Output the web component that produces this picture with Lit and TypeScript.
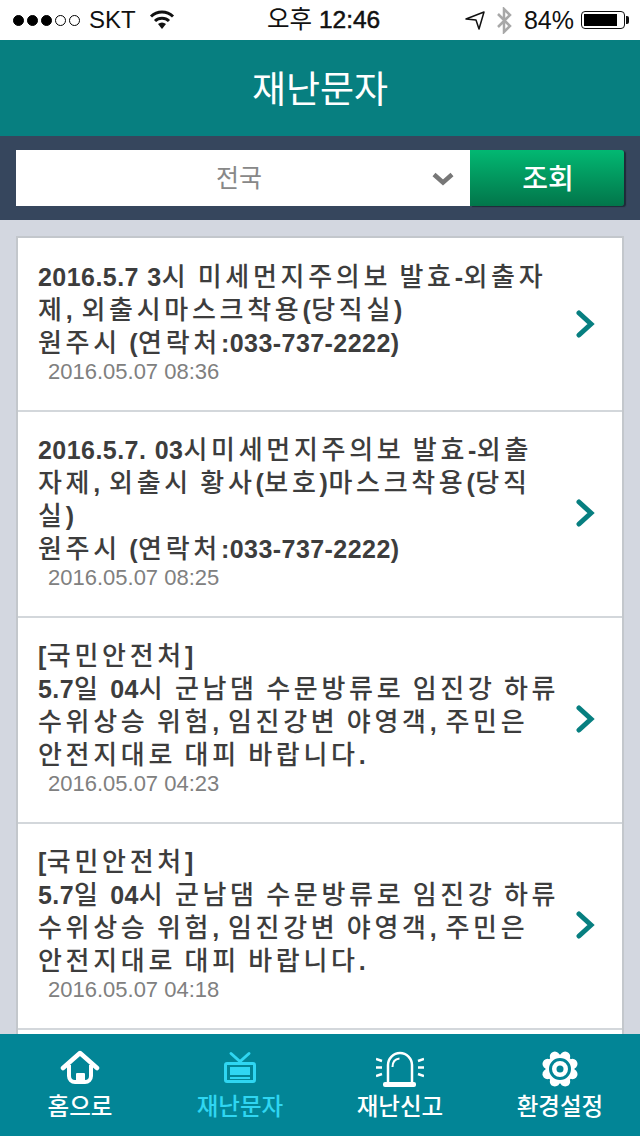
import { LitElement, html, css, svg } from 'lit';
import { customElement } from 'lit/decorators.js';

const alertLines = ['[국민안전처]', '5.7일 04시 군남댐 수문방류로 임진강 하류', '수위상승 위험, 임진강변 야영객, 주민은', '안전지대로 대피 바랍니다.'];

const messages = [
  { lines: ['2016.5.7 3시 미세먼지주의보 발효-외출자', '제, 외출시마스크착용(당직실)', '원주시 (연락처:033-737-2222)'], date: '2016.05.07 08:36' },
  { lines: ['2016.5.7. 03시미세먼지주의보 발효-외출', '자제, 외출시 황사(보호)마스크착용(당직', '실)', '원주시 (연락처:033-737-2222)'], date: '2016.05.07 08:25' },
  { lines: alertLines, date: '2016.05.07 04:23' },
  { lines: alertLines, date: '2016.05.07 04:18' },
];

const homeIcon = svg`<svg width="40" height="38" viewBox="0 0 40 38">
  <path d="M3 18 20 3l17 15" fill="none" stroke="currentColor" stroke-width="4.500" stroke-linecap="round" stroke-linejoin="round"/>
  <path d="M9 15v11a6 6 0 0 0 6 6h10a6 6 0 0 0 6-6V15" fill="none" stroke="currentColor" stroke-width="4"/>
  <path d="M16 33V24a1 1 0 0 1 1-1h7a1 1 0 0 1 1 1v9z" fill="currentColor"/>
</svg>`;

const tvIcon = svg`<svg width="32" height="38" viewBox="0 0 32 38">
  <path d="M7 3.500l9 8 9-8" fill="none" stroke="currentColor" stroke-width="3" stroke-linecap="round"/>
  <rect x="1.500" y="13.500" width="29" height="18" rx="1.500" fill="none" stroke="currentColor" stroke-width="3"/>
  <rect x="6" y="17" width="20" height="8" fill="currentColor"/>
  <rect x="6" y="27" width="20" height="2" fill="currentColor"/>
</svg>`;

const sirenIcon = svg`<svg width="48" height="38" viewBox="0 0 48 38">
  <path d="M12 32V15a12 12 0 0 1 24 0v17" fill="none" stroke="currentColor" stroke-width="2.500"/>
  <path d="M16.500 17c0-5 3-8 7-8.500" fill="none" stroke="currentColor" stroke-width="2"/>
  <rect x="7" y="32" width="33" height="5" rx="2" fill="currentColor"/>
  <path d="M0 9l6 2M0 17.500h6M0 26l6-2M48 9l-6 2M48 17.500h-6M48 26l-6-2" fill="none" stroke="currentColor" stroke-width="2.500"/>
</svg>`;

const lobes = [0, 45, 90, 135, 180, 225, 270, 315];
const gearIcon = svg`<svg width="38" height="38" viewBox="0 0 38 38">
  <circle cx="19" cy="19" r="14.500" fill="currentColor"/>
  ${lobes.map(a => svg`<circle cx="19" cy="5.500" r="5" fill="currentColor" transform="rotate(${a + 22.500} 19 19)"/>`)}
  <circle cx="19" cy="19" r="9.500" fill="none" stroke="#028596" stroke-width="3"/>
  <circle cx="19" cy="19" r="3.500" fill="#028596"/>
</svg>`;

// hangul runs get wider tracking and a lighter weight than the latin runs
const runs = (text: string) =>
  text.split(/([가-힣]+)/).map((part, i) => (i % 2 ? html`<span class="ko">${part}</span>` : part));

@customElement('app-root')
export class AppRoot extends LitElement {
  static styles = css`
    :host {
      display: flex;
      flex-direction: column;
      height: 1136px;
      overflow: hidden;
      background: #d3d7e0;
      font-family: 'Liberation Sans', 'Noto Sans CJK KR', sans-serif;
      position: relative;
    }
    .status {
      flex: none;
      height: 40px;
      background: #fff;
      display: flex;
      align-items: center;
      padding: 0 11px 0 13px;
      color: #111;
      font-size: 25px;
      position: relative;
    }
    .dots { display: flex; gap: 3px; margin-right: 9px; }
    .dot { width: 11px; height: 11px; border-radius: 50%; background: #000; border: 1px solid #000; box-sizing: border-box; }
    .dot.off { background: none; }
    .carrier { font-size: 24px; }
    .wifi { margin-left: 13px; }
    .left { display: flex; align-items: center; flex: 1; }
    .time { position: absolute; left: 267px; top: 2px; line-height: 36px; font-size: 24.500px; }
    .time b { font-weight: 400; -webkit-text-stroke: 0.5px #111; }
    .right { display: flex; align-items: center; }
    .bt { margin: 0 12px 0 11px; }
    .battery { width: 44px; height: 18px; border: 1px solid #111; border-radius: 4px; box-sizing: border-box; padding: 2px; margin-left: 7px; }
    .battery i { display: block; height: 100%; width: 86%; background: #000; }
    .nub { width: 3px; height: 8px; background: #111; border-radius: 0 2px 2px 0; margin-left: 1px; }
    .title {
      flex: none;
      height: 96px;
      box-sizing: border-box;
      padding-bottom: 2px;
      background: #077f80;
      color: #fff;
      font-size: 37px;
      display: flex;
      align-items: center;
      justify-content: center;
    }
    .search {
      flex: none;
      height: 84px;
      box-sizing: border-box;
      background: #36465d;
      padding: 14px 16px;
      display: flex;
    }
    .select {
      width: 454px;
      box-sizing: border-box;
      padding: 0 8px 5px 0;
      background: #fff;
      color: #888;
      font-size: 25px;
      display: flex;
      align-items: center;
      justify-content: center;
      position: relative;
    }
    .chev { position: absolute; left: 416px; top: 22px; }
    .btn {
      width: 154px;
      box-sizing: border-box;
      padding: 0 0 3px 2px;
      background: linear-gradient(#02b872, #02754a);
      color: #fff;
      font-size: 28px;
      font-weight: 500;
      display: flex;
      align-items: center;
      justify-content: center;
      border-radius: 0 3px 3px 0;
      box-shadow: 2px 1px 1px #1e2a38;
    }
    .scroll {
      flex: 1;
      min-height: 0;
      overflow: hidden;
      padding: 16px 16px 0;
    }
    .list {
      border: 2px solid #c3c7cc;
      border-bottom: 0;
      background: #fff;
      min-height: 800px;
    }
    .item {
      display: flex;
      align-items: center;
      border-bottom: 2px solid #d3d7db;
      padding: 22px 26px 25px 20px;
      color: #3d3d3d;
    }
    .item:first-child { padding-top: 23px; }
    .body { flex: 1; }
    .line {
      font-size: 25px;
      line-height: 33px;
      font-weight: 700;
      letter-spacing: 0.45px;
      word-spacing: 1px;
      white-space: nowrap;
    }
    .ko { font-size: 26px; font-weight: 500; letter-spacing: 3.700px; }
    .date {
      font-size: 22px;
      line-height: 26px;
      color: #808080;
      margin-left: 10px;
      margin-top: -1px;
    }
    .arrow { margin-top: 1px; }
    .tabs {
      flex: none;
      height: 102px;
      background: #028596;
      display: grid;
      grid-template-columns: repeat(4, 1fr);
      color: #fff;
    }
    .tab {
      display: flex;
      flex-direction: column;
      align-items: center;
      padding-top: 16px;
      font-size: 23.500px;
      font-weight: 500;
      line-height: 34px;
    }
    .tab svg { height: 38px; display: block; margin-bottom: 2px; }
    .tab.on { color: #2fd6f2; }
  `;

  render() {
    return html`
      <div class="status">
        <div class="left">
          <div class="dots">
            <i class="dot"></i><i class="dot"></i><i class="dot"></i><i class="dot off"></i><i class="dot off"></i>
          </div>
          <span class="carrier">SKT</span>
          <svg class="wifi" width="26" height="20" viewBox="0 0 26 20">
            <path d="M13 19 9 14a6 6 0 0 1 8 0z" fill="#111"/>
            <path d="M6 11a10 10 0 0 1 14 0M2 6.500a16 16 0 0 1 22 0" fill="none" stroke="#111" stroke-width="3"/>
          </svg>
        </div>
        <div class="time">오후 <b>12:46</b></div>
        <div class="right">
          <svg width="20" height="20" viewBox="0 0 20 20">
            <path d="M1 9 19 2l-5 17-3-9z" fill="none" stroke="#111" stroke-width="1.500" stroke-linejoin="round"/>
          </svg>
          <svg class="bt" width="16" height="27" viewBox="0 0 16 27">
            <path d="M2 7l12 12-6 6V2l6 6L2 20" fill="none" stroke="#a8a8a8" stroke-width="2.500"/>
          </svg>
          84%
          <div class="battery"><i></i></div>
          <div class="nub"></div>
        </div>
      </div>
      <div class="title">재난문자</div>
      <div class="search">
        <div class="select">
          <span>전국</span>
          <svg class="chev" width="22" height="14" viewBox="0 0 22 14">
            <path d="M2 2.500l9 8 9-8" fill="none" stroke="#777" stroke-width="4.500"/>
          </svg>
        </div>
        <div class="btn">조회</div>
      </div>
      <div class="scroll">
        <div class="list">
          ${messages.map(m => html`
            <div class="item">
              <div class="body">
                ${m.lines.map(l => html`<div class="line">${runs(l)}</div>`)}
                <div class="date">${m.date}</div>
              </div>
              <svg class="arrow" width="20" height="28" viewBox="0 0 20 28">
                <path d="M3 3l12 11L3 25" fill="none" stroke="#077f80" stroke-width="5" stroke-linecap="round"/>
              </svg>
            </div>
          `)}
        </div>
      </div>
      <div class="tabs">
        <div class="tab">${homeIcon}홈으로</div>
        <div class="tab on">${tvIcon}재난문자</div>
        <div class="tab">${sirenIcon}재난신고</div>
        <div class="tab">${gearIcon}환경설정</div>
      </div>
    `;
  }
}
